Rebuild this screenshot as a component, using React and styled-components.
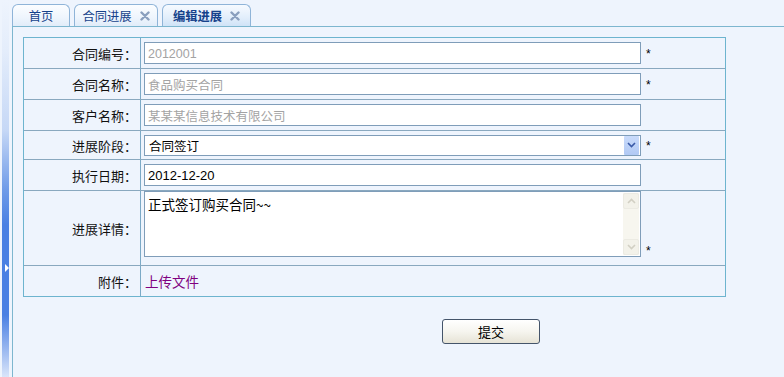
import React from 'react'
import styled, { createGlobalStyle } from 'styled-components'

const Global = createGlobalStyle`
  html, body {
    margin: 0;
    padding: 0;
    background: #eef4fd;
    font-family: "Liberation Sans", "Noto Sans CJK SC", sans-serif;
    font-size: 12px;
    color: #000;
  }
`

const Page = styled.div`
  display: flex;
  width: 784px;
  height: 377px;
  overflow: hidden;
`

const Side = styled.div`
  width: 12px;
  flex-shrink: 0;
  display: flex;
  justify-content: flex-start;
`

const SideBar = styled.div`
  position: relative;
  margin-left: 2px;
  width: 7px;
  height: 100%;
  background: linear-gradient(
    to bottom,
    #eef4fd 0px,
    #e4edfb 50px,
    #c6d8f6 130px,
    #6f9be8 190px,
    #4a80e3 225px,
    #4a80e3 315px,
    #8fb0ee 345px,
    #d9e5fa 377px
  );
`

const SideArrow = styled.div`
  position: absolute;
  left: 3px;
  top: 264px;
  width: 0;
  height: 0;
  border-top: 4px solid transparent;
  border-bottom: 4px solid transparent;
  border-left: 4px solid #ffffff;
`

const Main = styled.div`
  flex: 1;
  display: flex;
  flex-direction: column;
`

const TabBar = styled.div`
  display: flex;
  gap: 4px;
  height: 27px;
  padding-top: 4px;
  box-sizing: border-box;
  border-bottom: 1px solid #7db6cf;
`

const Tab = styled.div`
  width: ${p => p.$w}px;
  height: 22px;
  box-sizing: border-box;
  display: flex;
  align-items: center;
  justify-content: center;
  gap: 8px;
  border: 1px solid #8fb4d8;
  border-bottom: none;
  border-radius: 6px 6px 0 0;
  background: ${p => p.$active
    ? 'linear-gradient(to bottom, #f6faff 0%, #e2eefb 60%, #cfe3f7 100%)'
    : 'linear-gradient(to bottom, #fbfdff 0%, #eef5fd 60%, #e1ecf9 100%)'};
  color: #15428b;
  font-family: "Noto Sans CJK SC", sans-serif;
  font-size: 12.3px;
  font-weight: ${p => (p.$active ? 'bold' : 'normal')};
  padding-top: 1px;
`

const Close = () => (
  <svg width="10" height="10" viewBox="0 0 10 10">
    <path d="M1.5 1.5 L8.5 8.5 M8.5 1.5 L1.5 8.5" stroke="#8a9fbe" strokeWidth="2.4" strokeLinecap="round" />
  </svg>
)

const Panel = styled.div`
  flex: 1;
  border-left: 1px solid #7db6cf;
  padding: 10px 0 0 10px;
`

const Form = styled.div`
  width: 703px;
  box-sizing: border-box;
  border: 1px solid #6db4cf;
`

const Row = styled.div`
  display: flex;
  box-sizing: border-box;
  height: ${p => p.$h}px;
  border-top: ${p => (p.$first ? 'none' : '1px solid #89a8bf')};
`

const Label = styled.div`
  width: 117px;
  flex-shrink: 0;
  box-sizing: border-box;
  border-right: 1px solid #7ba9c6;
  display: flex;
  align-items: center;
  justify-content: flex-end;
  padding-right: 3px;
  font-family: "Noto Sans CJK SC", sans-serif;
  font-size: 13px;
  color: #111;
`

const Field = styled.div`
  flex: 1;
  display: flex;
  align-items: ${p => (p.$end ? 'flex-end' : 'center')};
  padding-left: 3px;
  padding-bottom: ${p => (p.$end ? '8px' : '0')};
  box-sizing: border-box;
`

const Input = styled.div`
  width: 497px;
  height: 22px;
  box-sizing: border-box;
  border: 1px solid #7f9db9;
  background: #fff;
  display: flex;
  align-items: center;
  padding-left: 3px;
  color: ${p => (p.$muted ? '#a3a3a3' : '#000')};
  font-size: ${p => (p.$muted ? '12.5px' : '13px')};
  padding-top: 1px;
`

const Star = styled.span`
  margin-left: 5px;
  font-size: 12px;
  line-height: 12px;
  padding-top: 1px;
`

const Select = styled.div`
  width: 497px;
  height: 21px;
  box-sizing: border-box;
  border: 1px solid #7f9db9;
  background: #fff;
  display: flex;
  align-items: center;
`

const SelectText = styled.span`
  flex: 1;
  padding-left: 4px;
  padding-top: 1px;
  font-size: 12.5px;
`

const DropButton = styled.div`
  width: 15px;
  height: 19px;
  margin-right: 1px;
  display: flex;
  align-items: center;
  justify-content: center;
  background: linear-gradient(to bottom, #c9dbfb, #b1c9f4);
  border-radius: 1px;
`

const TextBox = styled.div`
  width: 497px;
  height: 66px;
  box-sizing: border-box;
  border: 1px solid #7f9db9;
  background: #fff;
  display: flex;
`

const TextContent = styled.div`
  flex: 1;
  padding: 2px 0 0 3px;
  font-family: "Noto Sans CJK SC", sans-serif;
  font-size: 13.5px;
`

const ScrollTrack = styled.div`
  width: 16px;
  margin: 1px 1px 1px 0;
  background: #f7f6ef;
  display: flex;
  flex-direction: column;
  justify-content: space-between;
`

const ScrollBtn = styled.div`
  height: 16px;
  box-sizing: border-box;
  border: 1px solid #ecebe3;
  background: #f3f2ea;
  border-radius: 2px;
  display: flex;
  align-items: center;
  justify-content: center;
`

const Link = styled.a`
  color: #800080;
  text-decoration: none;
  font-family: "Noto Sans CJK SC", sans-serif;
  font-size: 13.5px;
  padding-left: 1px;
  cursor: pointer;
`

const ButtonRow = styled.div`
  padding: 22px 0 0 419px;
`

const Submit = styled.button`
  width: 98px;
  height: 25px;
  border: 1px solid #44546a;
  border-radius: 3px;
  background: linear-gradient(to bottom, #ffffff 0%, #f6f5ef 50%, #e6e3d6 100%);
  font-family: "Noto Sans CJK SC", sans-serif;
  font-size: 13px;
  color: #000;
  padding: 0;
`

const Chevron = ({ up, color = '#d2d0c4' }) => (
  <svg width="9" height="6" viewBox="0 0 9 6">
    <path d={up ? 'M1 5 L4.5 1.5 L8 5' : 'M1 1 L4.5 4.5 L8 1'} fill="none" stroke={color} strokeWidth="1.6" />
  </svg>
)

const rows = [
  { label: '合同编号：', value: '2012001', star: true },
  { label: '合同名称：', value: '食品购买合同', star: true },
  { label: '客户名称：', value: '某某某信息技术有限公司' },
]

export default function App() {
  return (
    <Page>
      <Global />
      <Side>
        <SideBar>
          <SideArrow />
        </SideBar>
      </Side>
      <Main>
        <TabBar>
          <Tab $w={58}>首页</Tab>
          <Tab $w={84}>合同进展<Close /></Tab>
          <Tab $w={89} $active>编辑进展<Close /></Tab>
        </TabBar>
        <Panel>
          <Form>
            {rows.map((r, i) => (
              <Row key={r.label} $h={i === 0 ? 30 : 31} $first={i === 0}>
                <Label>{r.label}</Label>
                <Field>
                  <Input $muted>{r.value}</Input>
                  {r.star && <Star>*</Star>}
                </Field>
              </Row>
            ))}
            <Row $h={29}>
              <Label>进展阶段：</Label>
              <Field>
                <Select>
                  <SelectText>合同签订</SelectText>
                  <DropButton>
                    <Chevron color="#3a5aa8" />
                  </DropButton>
                </Select>
                <Star>*</Star>
              </Field>
            </Row>
            <Row $h={31}>
              <Label>执行日期：</Label>
              <Field>
                <Input>2012-12-20</Input>
              </Field>
            </Row>
            <Row $h={75}>
              <Label>进展详情：</Label>
              <Field $end>
                <TextBox>
                  <TextContent>正式签订购买合同~~</TextContent>
                  <ScrollTrack>
                    <ScrollBtn><Chevron up /></ScrollBtn>
                    <ScrollBtn><Chevron /></ScrollBtn>
                  </ScrollTrack>
                </TextBox>
                <Star>*</Star>
              </Field>
            </Row>
            <Row $h={31}>
              <Label>附件：</Label>
              <Field>
                <Link>上传文件</Link>
              </Field>
            </Row>
          </Form>
          <ButtonRow>
            <Submit>提交</Submit>
          </ButtonRow>
        </Panel>
      </Main>
    </Page>
  )
}
